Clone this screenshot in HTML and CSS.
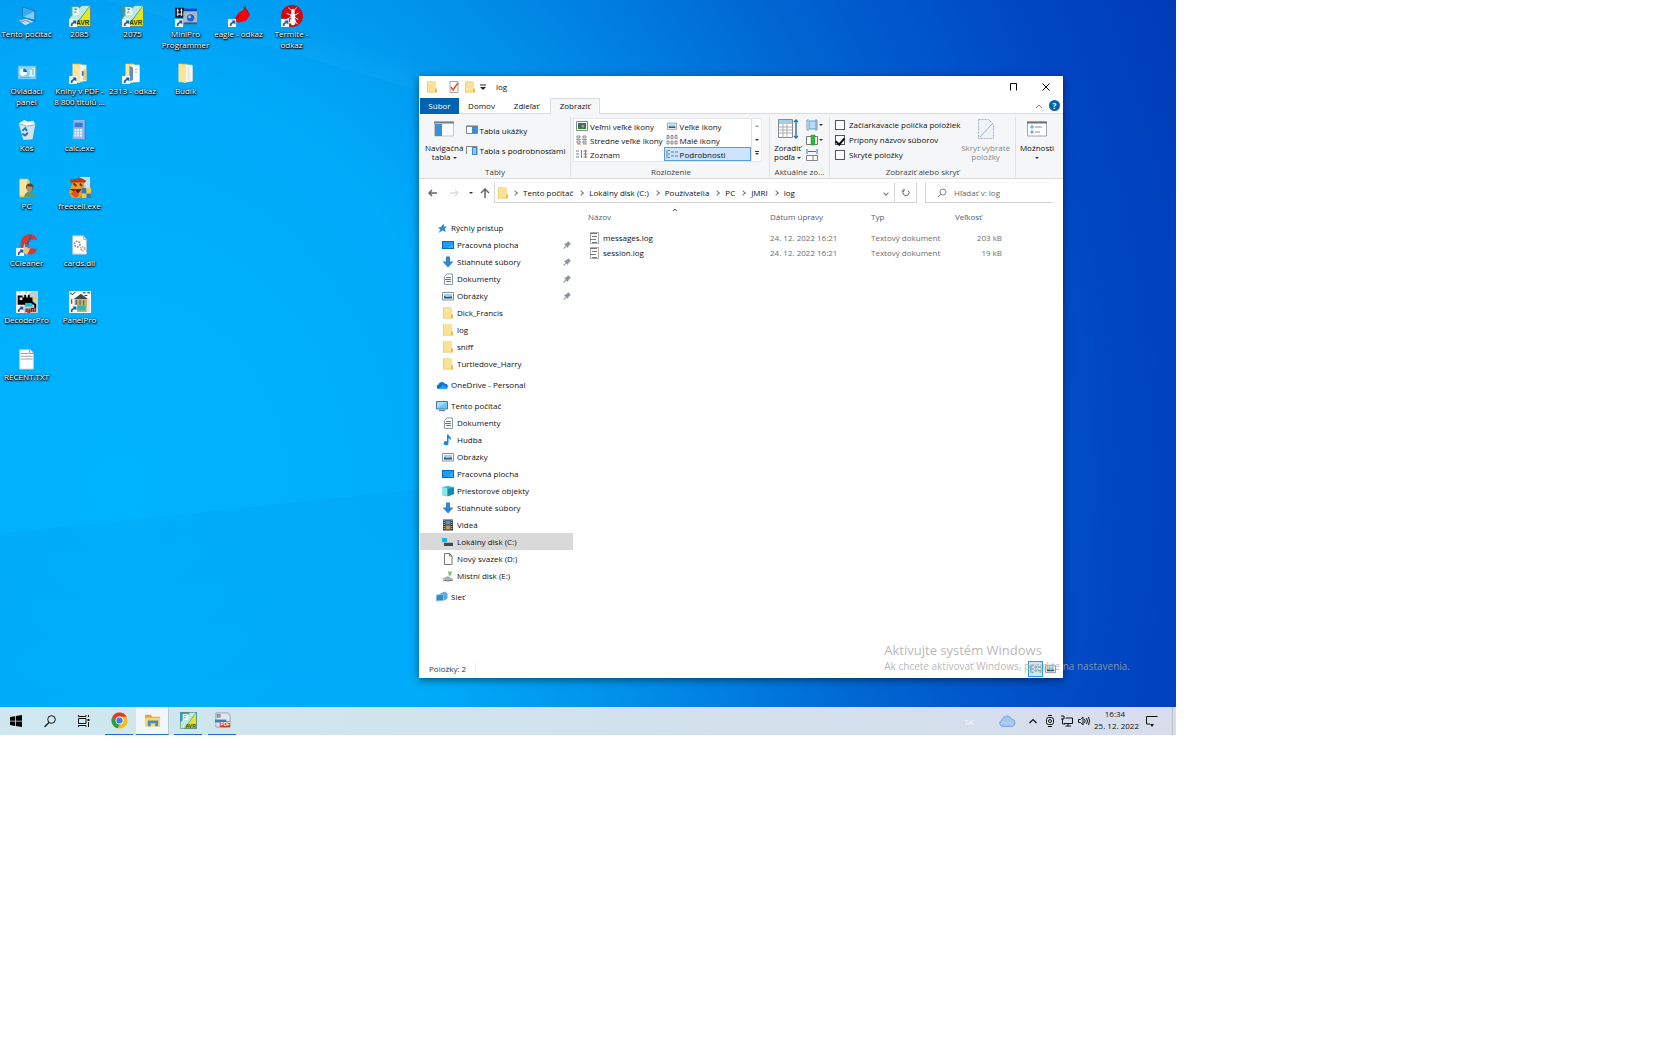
FILE: index.html
```
<!DOCTYPE html>
<html lang="sk">

<head>
    <meta charset="UTF-8">
    <meta name="viewport" content="width=device-width, initial-scale=1.0">
    <title>log</title>
    <link rel="stylesheet" href="styles.css">
</head>

<body>
    <svg class="sprite" aria-hidden="true">
        <symbol id="folder" viewBox="0 0 12 12"><path d="M1 .5h8.500V7l1.500 1v3.500H1z" fill="#e6bd55"/><path d="M1.500 1h7.500v9.800H1.500z" fill="#fde293"/></symbol>
        <symbol id="desktop" viewBox="0 0 12 12"><path d="M0 2h12v8H0z" fill="#0869b8"/><path d="M1 3h10v6H1z" fill="#1b9cf5"/><path d="M6 9l5-5v5z" fill="#39adff"/></symbol>
        <symbol id="download" viewBox="0 0 12 12"><path d="M4 .5h4v5h3.500L6 11.500.5 5.500H4z" fill="#2f86d6"/></symbol>
        <symbol id="doc" viewBox="0 0 12 12"><path d="M2.500 3.500L5 1h5.500v10.500h-8z" fill="#fff" stroke="#8c9aa5"/><path d="M4 4.500h5M3 6.500h6M4 8.500h5" stroke="#2489cf" stroke-width="1.200"/></symbol>
        <symbol id="picture" viewBox="0 0 12 12"><path d="M.5 2.500h11v7.500H.5z" fill="#fff" stroke="#8a8f94"/><path d="M2 4h8v4.500H2z" fill="#9fd0ee"/><path d="M2 8.500V6l3 1 5-.5v2z" fill="#2d5d7c"/></symbol>
        <symbol id="star" viewBox="0 0 12 12"><path d="M7.500 1.500l.5 3h3L9 6.500l.5 3.500L6.500 8.500l-4 2.500 1.800-3.500L2 5.500l3-.5z" fill="#2f8fdd"/></symbol>
        <symbol id="cloud" viewBox="0 0 12 12"><path d="M2.500 10a2.300 2.300 0 0 1 0-4.500A3.500 3.500 0 0 1 9 4.800a2.600 2.600 0 0 1 .5 5.200z" fill="#1273cb"/><path d="M2.500 10L7 6l4.500 2.500q-.4 1.500-2 1.500z" fill="#28a0ea"/></symbol>
        <symbol id="pc" viewBox="0 0 12 12"><path d="M.5 1.500h11v7.500H.5z" fill="#70c3f3" stroke="#3b7eaa"/><path d="M1 2h10L1 8z" fill="#a5ddfa"/><path d="M3 10.500h6" stroke="#5b7d93" stroke-width="1.200"/></symbol>
        <symbol id="music" viewBox="0 0 12 12"><path d="M5 .5h1.500c0 2 3.500 2.500 2.500 6-.4-1.500-1.400-2-2.500-2.300V9A2.400 2.100 0 1 1 5 7.200z" fill="#1689dc"/></symbol>
        <symbol id="cube" viewBox="0 0 12 12"><path d="M0 2l6-1 6 1v7l-6 2.500L0 10z" fill="#31b8cf"/><path d="M0 2l5 1v8L0 10z" fill="#8be5ef"/><path d="M6 4l6-1.500V9l-6 2z" fill="#168cad"/></symbol>
        <symbol id="video" viewBox="0 0 12 12"><path d="M1 .5h10v11H1z" fill="#333b43"/><path d="M3.500 1.500h5v4h-5z" fill="#6292b6"/><path d="M3.500 6.500h5v4h-5z" fill="#c29a4b"/><path d="M2.200 1v10M9.800 1v10" stroke="#d3d7da" stroke-dasharray="1 1"/></symbol>
        <symbol id="disk" viewBox="0 0 12 12"><path d="M0 2h5v4H0z" fill="#11b2ed"/><path d="M2 7h9v3H2z" fill="#42484d"/><path d="M1.500 6.500h9" stroke="#aeb6bc"/></symbol>
        <symbol id="page" viewBox="0 0 12 12"><path d="M2.500.5H7.500L10 3v8.500H2.500z" fill="#fff" stroke="#777"/><path d="M7.500.5V3H10" fill="none" stroke="#777"/></symbol>
        <symbol id="usb" viewBox="0 0 12 12"><path d="M0 8.500l6-2.500 5 3-4 2z" fill="#aeb2b5"/><path d="M1 10l5 1 5-1" stroke="#6b6f72" fill="none"/><path d="M6 1l2 1 2-1-1 4-2 1z" fill="#79be5f"/></symbol>
        <symbol id="network" viewBox="0 0 12 12"><path d="M4 2.500l5-2 2.500 2v5l-3 2z" fill="#58aade"/><path d="M.5 4l7-.7v6l-7 .7z" fill="#348bc7" stroke="#80c1e8"/></symbol>
        <symbol id="pin" viewBox="0 0 8 8"><path d="M5 0l3 3-1 .4L5.500 5 5 7 3.400 5.400 1 8l-.7-.7L2.700 4.700 1 3l2-.5L4.600 1z" fill="#8a949d"/></symbol>
        <symbol id="textfile" viewBox="0 0 12 12"><path d="M2.500.5h8v11h-8z" fill="#fff" stroke="#aaa"/><path d="M2 1.500h7M4 4.500h5M2 7.500h6M4 10.500h5" stroke="#777"/></symbol>
        <symbol id="pane-left" viewBox="0 0 20 16"><path d="M.5 1h19v14H.5z" fill="#f8fafc" stroke="#c0c6ca"/><path d="M0 .5h20v2H0z" fill="#777d82"/><path d="M1 3h7v12H1z" fill="#398fd8"/></symbol>
        <symbol id="pane-right" viewBox="0 0 12 10"><path d="M.5 1.500h11v7H.5z" fill="#fff" stroke="#7e878d"/><path d="M6 2h5v6H6z" fill="#378dd7"/><path d="M0 1h12" stroke="#71787d"/></symbol>
        <symbol id="pane-detail" viewBox="0 0 12 10"><path d="M.5 9V1.500h11" fill="none" stroke="#7e878d"/><path d="M6 2h5.500v8H6z" fill="#378dd7"/><path d="M7 4h3M7 6h3M7 8h3" stroke="#fff"/></symbol>
        <symbol id="tiles" viewBox="0 0 12 10"><path d="M1 1h3v2H1zM7 1h3v2H7zM1 6h3v2H1zM7 6h3v2H7z" fill="none" stroke="#6c767d" stroke-width=".8"/><path d="M0 4.500h5M6 4.500h5M1 9h4M7 9h4" stroke="#bd6e58" stroke-width=".8"/></symbol>
        <symbol id="small-grid" viewBox="0 0 12 10"><path d="M1 .5h2v3H1zM1 6h2v3H1zM5 .5h2v3H5zM5 6h2v3H5zM9 .5h2v3H9zM9 6h2v3H9z" fill="none" stroke="#766d70" stroke-width=".8"/></symbol>
        <symbol id="listing" viewBox="0 0 12 10"><path d="M0 2h3M0 5h3M0 8h3M5.500 1v8M7.500 2h4M7.500 5h4M7.500 8h4M9.500 1v8" stroke="#7b8085"/></symbol>
        <symbol id="details" viewBox="0 0 12 10"><path d="M1 1v8M2 1.500h2M2 5h2M2 8.500h2M5 3h3M9 3h3M5 7h3M9 7h3" stroke="#5d7e9d"/></symbol>
        <symbol id="sort" viewBox="0 0 20 20"><path d="M.5.5h14v18H.5z" fill="#fff" stroke="#868c90"/><path d="M1 1h13v4H1z" fill="#a6cbe4"/><path d="M1 8h13M1 11h13M1 14h13M5 5v13M9 5v13" stroke="#a9adb0"/><path d="M18 1v18M16 3l2-2 2 2M16 17l2 2 2-2" fill="none" stroke="#2e78b7" stroke-width="1.500"/></symbol>
        <symbol id="group" viewBox="0 0 12 12"><path d="M1 1v10M11 1v10M1 1h2M1 11h2M9 1h2M9 11h2" stroke="#86929c"/><path d="M3 2h7v8H3z" fill="#b4dcfa" stroke="#5c9ed0"/></symbol>
        <symbol id="columns" viewBox="0 0 12 12"><path d="M.5 2.500h11v8H.5z" fill="#fff" stroke="#777"/><path d="M5 1h4v10H5z" fill="#26bd32" stroke="#666" stroke-width=".5"/></symbol>
        <symbol id="fit" viewBox="0 0 12 12"><path d="M1 0v5M11 0v5M2 2.500h8" stroke="#287eca"/><path d="M.5 6.500h11v5H.5zM7 6.500v5" fill="#fff" stroke="#858585"/></symbol>
        <symbol id="hide" viewBox="0 0 16 20"><path d="M.5.5h10l5 5v14H.5z" fill="#edf2fb" stroke="#a4afc2" stroke-dasharray="2 1"/><path d="M2 18L15 4" stroke="#a4b0c5"/></symbol>
        <symbol id="options" viewBox="0 0 20 16"><path d="M.5 1h19v14H.5z" fill="#fff" stroke="#a3a8ac"/><path d="M0 .5h20v2H0z" fill="#6c7378"/><path d="M4 5h2v2H4zM4 10h2v2H4z" fill="none" stroke="#4a9edb"/><path d="M8 6h7M8 11h5" stroke="#838b91"/></symbol>
        <symbol id="shortcut" viewBox="0 0 9 9"><path d="M0 0h9v9H0z" fill="#f5f8fb"/><path d="M2 8q-.5-4 3-4.500L4 2h4v4L6.500 5Q3.500 5 3.800 8z" fill="#185aa9"/></symbol>
        <symbol id="big-folder" viewBox="0 0 24 24"><path d="M4 2h9l2 3v17H4z" fill="#f2cc68"/><path d="M11 3h8v18h-8z" fill="#f6f4e9"/><path d="M4 2l8 2v19l-8-2z" fill="#fde49b"/><path d="M16 8h3v12h-4z" fill="#f0cc72"/></symbol>
        <symbol id="bascom" viewBox="0 0 24 24"><path d="M0 0h24v24H0z" fill="#2ba8ac"/><path d="M0 24V15L15 0h8L5 24z" fill="#bfe8de"/><path d="M23 1v22H7z" fill="#e3e522"/><path d="M.5.5h23v23H.5z" fill="none" stroke="#59858e"/></symbol>
    </svg>

    <main class="desktop">
        <div class="icons">
            <a class="shortcut" href="#"><svg viewBox="0 0 24 24"><path d="M7 2l14 4v12L7 14z" fill="#216cab"/><path d="M8 3l12 4v9L8 13z" fill="#71d3ff"/><path d="M8 3l12 4L8 13z" fill="#37adf0"/><path d="M3 17l8-2 8 3-9 4z" fill="#c3ddeb"/><path d="M5 18l6-1 5 2" stroke="#628ba2" fill="none"/></svg><span>Tento počítač</span></a>
            <a class="shortcut" href="#"><svg viewBox="0 0 24 24"><use href="#bascom"/><text class="logo-b" x="3" y="11">B</text><text class="logo-avr" x="8" y="22">AVR</text><use href="#shortcut" y="15" width="9" height="9"/></svg><span>2085</span></a>
            <a class="shortcut" href="#"><svg viewBox="0 0 24 24"><use href="#bascom"/><text class="logo-b" x="3" y="11">B</text><text class="logo-avr" x="8" y="22">AVR</text><use href="#shortcut" y="15" width="9" height="9"/></svg><span>2075</span></a>
            <a class="shortcut" href="#"><svg viewBox="0 0 24 24"><path d="M0 3h10v11H0z" fill="#161e24"/><path d="M3 4v8M7 4v8M2 6h2M6 6h2M2 10h6" stroke="#fff"/><path d="M10 4h14v3H10z" fill="#1743b2"/><path d="M9 7h15v13H9z" fill="#a9b8c7"/><circle cx="17" cy="14" r="4" fill="#1c62df"/><circle cx="16" cy="13" r="1.500" fill="#9fd8ff"/><path d="M10 19h14v2H10z" fill="#495365"/><use href="#shortcut" y="15" width="9" height="9"/></svg><span>MiniPro Programmer</span></a>
            <a class="shortcut" href="#"><svg viewBox="0 0 24 24"><path d="M19 0l1 4 4 7-4 6-8 2-6-2 5-8 6-4z" fill="#f5050b"/><path d="M17 2l2 3M20 5l3 5M8 17l4-6" stroke="#74141e"/><use href="#shortcut" y="15" width="9" height="9"/></svg><span>eagle - odkaz</span></a>
            <a class="shortcut" href="#"><svg viewBox="0 0 24 24"><circle cx="12" cy="12" r="12" fill="#cb0c17"/><ellipse cx="13" cy="7" rx="2" ry="3" fill="#fff"/><ellipse cx="13" cy="12" rx="2.500" ry="3" fill="#fff"/><ellipse cx="13" cy="18" rx="3" ry="4" fill="#fff"/><path d="M8 3l5 4 4-4M6 9l7 3 6-3M6 16l7-4 6 4M8 21l5-7 5 7" stroke="#fff" fill="none"/><use href="#shortcut" y="15" width="9" height="9"/></svg><span>Termite - odkaz</span></a>

            <a class="shortcut" href="#"><svg viewBox="0 0 24 24"><path d="M2 4h20v15H2z" fill="#88d3f6" stroke="#479bc7"/><circle cx="8" cy="11" r="4" fill="#edfaff"/><path d="M8 11V7a4 4 0 0 1 4 4z" fill="#136eb3"/><path d="M14 9h2v6h-2M18 7h2v8h-3V9" fill="none" stroke="#fff"/><path d="M4 17h12" stroke="#54b5df"/></svg><span>Ovládací panel</span></a>
            <a class="shortcut" href="#"><svg viewBox="0 0 24 24"><use href="#big-folder"/><path d="M14 10h2v5h-2z" fill="#3c77b0"/><use href="#shortcut" y="15" width="9" height="9"/></svg><span>Knihy v PDF - 8 800 titulů ...</span></a>
            <a class="shortcut" href="#"><svg viewBox="0 0 24 24"><use href="#big-folder"/><path d="M8 4h11v18H8z" fill="#fff"/><path d="M8 4l4 2v14l-4 1z" fill="#5691c4"/><path d="M14 8h3M14 11h3" stroke="#a7adb3"/><use href="#shortcut" y="15" width="9" height="9"/></svg><span>2313 - odkaz</span></a>
            <a class="shortcut" href="#"><svg viewBox="0 0 24 24"><use href="#big-folder"/><path d="M12 5l7-1v17l-7 1z" fill="#f7f7f1"/><path d="M15 5v16" stroke="#d8d8cc"/></svg><span>Budík</span></a>

            <a class="shortcut row-start" href="#"><svg viewBox="0 0 24 24"><path d="M3 5l18 1-3 16-10 1z" fill="#d4e4ec"/><path d="M3 5l6-4 4 2 6-1 2 4-9 2z" fill="#f6fafb"/><path d="M3 5l9 3 9-2" stroke="#8ea8b5" fill="none"/><path d="M7 13l3-3 2 3M13 15l-3 3-3-2" fill="none" stroke="#1975bc" stroke-width="2"/></svg><span>Kôš</span></a>
            <a class="shortcut" href="#"><svg viewBox="0 0 24 24"><path d="M5 1h13l1 21-15 1z" fill="#4482c6"/><path d="M5 1h12v21H4z" fill="#93baf0"/><path d="M6 4h9v5H6z" fill="#3c77d1"/><path d="M6 12h9M6 15h9M6 18h9" stroke="#eff8ff" stroke-width="2" stroke-dasharray="2 1"/></svg><span>calc.exe</span></a>
            <a class="shortcut row-start" href="#"><svg viewBox="0 0 24 24"><path d="M4 2h9l2 3v17H4z" fill="#eac96c"/><path d="M4 3h8v18l-8-1z" fill="#fce39b"/><circle cx="15" cy="11" r="4" fill="#594135"/><path d="M12 10q4 0 6 1v3l-3 3-3-2z" fill="#b48b67"/><path d="M9 22q0-6 6-6 5 0 6 6z" fill="#5a9a78"/></svg><span>PC</span></a>
            <a class="shortcut" href="#"><svg viewBox="0 0 24 24"><path d="M12 0h11v14H12z" fill="#c9dff2"/><path d="M1 3l12-2 6 3-3 3H3z" fill="#bd3b15"/><path d="M4 6h12l2 10-6 7H3L0 17z" fill="#e59a30"/><path d="M5 7l3 3M12 7l2 3M4 14h8l-3 4z" stroke="#652e18" stroke-width="2"/><path d="M2 18l5-4 4 6-4 3z" fill="#de541c"/><path d="M14 12h5v6h-5zM19 18h5v5h-5z" fill="#367ab8"/><path d="M19 12h5v6h-5zM14 18h5v5h-5z" fill="#f6c544"/></svg><span>freecell.exe</span></a>
            <a class="shortcut row-start" href="#"><svg viewBox="0 0 24 24"><path d="M23 7Q17 4 14 9q-2 8 9 7-2 7-10 6Q5 20 5 11T14 0q8 0 9 7z" fill="#d8392f"/><path d="M17 1l-6 12" stroke="#2365a1" stroke-width="2"/><path d="M9 10l7 5-4 8-5-4z" fill="#edbf89"/><path d="M9 10l5 3 2 3-6-2z" fill="#2986c5"/><use href="#shortcut" y="15" width="9" height="9"/></svg><span>CCleaner</span></a>
            <a class="shortcut" href="#"><svg viewBox="0 0 24 24"><path d="M4 2h12l3 4v16H4z" fill="#fff" stroke="#b6bec4"/><path d="M16 2v4h3" fill="none" stroke="#a0a8ad"/><circle cx="9" cy="11" r="3" fill="none" stroke="#91999e" stroke-width="2" stroke-dasharray="2 1"/><circle cx="15" cy="16" r="2" fill="none" stroke="#91999e" stroke-width="2" stroke-dasharray="1 1"/></svg><span>cards.dll</span></a>
            <a class="shortcut row-start" href="#"><svg viewBox="0 0 24 24"><path d="M0 0h24v24H0z" fill="#c9cdce"/><path d="M2 1v3h4V1h3v3h4V1h3" stroke="#fff" stroke-width="2" fill="none"/><path d="M2 5h5v2h2V4h2v3h2V4h2v3h3v8H2z" fill="#000"/><path d="M4 7h3v3H4z" fill="#ddd"/><path d="M19 8h4" stroke="#e9d431" stroke-width="2"/><path d="M10 13h8v4h-8z" fill="#19c8ce"/><path d="M17 12l4 3v4" stroke="#000" stroke-width="2" fill="none"/><path d="M11 19v4M13 19v4h2v-4M17 23v-4h2v4M21 19v4" stroke="#a51414" stroke-width="1.500" fill="none"/><use href="#shortcut" y="15" width="9" height="9"/></svg><span>DecoderPro</span></a>
            <a class="shortcut" href="#"><svg viewBox="0 0 24 24"><path d="M0 0h24v24H0z" fill="#fff"/><path d="M1 2l3 2 3-3M15 2h3M20 2h3M17 5h3M3 9v5" stroke="#111" fill="none"/><path d="M5 9l8-6 8 6z" fill="#424946"/><path d="M6 9h14v14H6z" fill="#b9ad7e"/><path d="M8 10v5M12 10v5M16 10v5" stroke="#424946"/><path d="M9 16h9v5H9z" fill="#29bca6"/><path d="M20 8h3v15h-4z" fill="#e5e8cf"/><use href="#shortcut" y="15" width="9" height="9"/></svg><span>PanelPro</span></a>
            <a class="shortcut row-start" href="#"><svg viewBox="0 0 24 24"><path d="M4 2h12l3 4v17H4z" fill="#fff" stroke="#c5cacd"/><path d="M15 2v4h4" fill="none" stroke="#8c9296"/><path d="M5 6h9M5 9h13M5 12h13" stroke="#96999c"/></svg><span>RECENT.TXT</span></a>
        </div>

        <section class="window">
            <header class="titlebar">
                <svg class="ico"><use href="#folder"/></svg>
                <svg class="ico check-icon" viewBox="0 0 12 12"><path d="M2 .5h8v11H2z" fill="#fff" stroke="#aaa"/><path d="M3 6l2 3 5-7" fill="none" stroke="#df4f24" stroke-width="1.500"/></svg>
                <svg class="ico"><use href="#folder"/></svg>
                <svg class="caret" viewBox="0 0 6 6"><path d="M0 1h6" stroke="#222"/><path d="M0 3h6L3 6z" fill="#222"/></svg>
                <h1>log</h1>
                <div class="controls">
                    <button aria-label="Maximalizovať"><svg viewBox="0 0 8 8"><path d="M.5 7.500v-7h6v7" fill="none" stroke="#000"/></svg></button>
                    <button aria-label="Zavrieť"><svg viewBox="0 0 8 8"><path d="M.5.5l7 7m0-7l-7 7" stroke="#000"/></svg></button>
                </div>
            </header>

            <nav class="tabs">
                <button class="tab file">Súbor</button>
                <button class="tab home">Domov</button>
                <button class="tab share">Zdieľať</button>
                <button class="tab active">Zobraziť</button>
                <button class="collapse" aria-label="Zbaliť"><svg viewBox="0 0 8 8"><path d="M1 6l3-3 3 3" fill="none" stroke="#888"/></svg></button>
                <button class="help" aria-label="Pomocník">?</button>
            </nav>

            <div class="ribbon">
                <div class="group panes">
                    <div class="tools">
                        <button class="big"><svg class="wide"><use href="#pane-left"/></svg><span>Navigačná<br>tabla <i class="arrow"></i></span></button>
                        <div class="stack">
                            <button><svg class="ico"><use href="#pane-right"/></svg>Tabla ukážky</button>
                            <button><svg class="ico"><use href="#pane-detail"/></svg>Tabla s podrobnosťami</button>
                        </div>
                    </div>
                    <h2>Tably</h2>
                </div>
                <div class="group layout">
                    <div class="gallery">
                        <div class="choices">
                            <button><svg class="ico" viewBox="0 0 12 10"><path d="M.5.5h11v9H.5z" fill="#fff" stroke="#888"/><path d="M2 2h8v6H2z" fill="#346d9b"/><path d="M2 8V5l4-1 4 3v1z" fill="#308437"/><circle cx="7" cy="5" r="1.500" fill="#db8e3e"/></svg>Veľmi veľké ikony</button>
                            <button><svg class="ico"><use href="#picture"/></svg>Veľké ikony</button>
                            <button><svg class="ico"><use href="#tiles"/></svg>Stredne veľké ikony</button>
                            <button><svg class="ico"><use href="#small-grid"/></svg>Malé ikony</button>
                            <button><svg class="ico"><use href="#listing"/></svg>Zoznam</button>
                            <button class="selected"><svg class="ico"><use href="#details"/></svg>Podrobnosti</button>
                        </div>
                        <div class="scroller">
                            <button aria-label="Hore"><i class="arrow up"></i></button>
                            <button aria-label="Dole"><i class="arrow"></i></button>
                            <button aria-label="Viac"><i class="arrow more"></i></button>
                        </div>
                    </div>
                    <h2>Rozloženie</h2>
                </div>
                <div class="group current">
                    <div class="tools">
                        <button class="big"><svg class="tall"><use href="#sort"/></svg><span>Zoradiť<br>podľa <i class="arrow"></i></span></button>
                        <div class="minis">
                            <button aria-label="Zoskupiť podľa"><svg class="ico"><use href="#group"/></svg><i class="arrow"></i></button>
                            <button aria-label="Pridať stĺpce"><svg class="ico"><use href="#columns"/></svg><i class="arrow"></i></button>
                            <button aria-label="Prispôsobiť stĺpce"><svg class="ico"><use href="#fit"/></svg></button>
                        </div>
                    </div>
                    <h2>Aktuálne zo...</h2>
                </div>
                <div class="group show">
                    <div class="tools">
                        <div class="checks">
                            <label><input type="checkbox">Začiarkavacie políčka položiek</label>
                            <label><input type="checkbox" checked>Prípony názvov súborov</label>
                            <label><input type="checkbox">Skryté položky</label>
                        </div>
                        <button class="big" disabled><svg class="tall"><use href="#hide"/></svg><span>Skryť vybraté<br>položky</span></button>
                    </div>
                    <h2>Zobraziť alebo skryť</h2>
                </div>
                <div class="group last">
                    <button class="big"><svg class="wide"><use href="#options"/></svg><span>Možnosti<br><i class="arrow"></i></span></button>
                </div>
            </div>

            <div class="location">
                <div class="history">
                    <button aria-label="Späť"><svg viewBox="0 0 10 10"><path d="M9 5H1m3-3L1 5l3 3" fill="none" stroke="#666" stroke-width="1.500"/></svg></button>
                    <button aria-label="Dopredu"><svg viewBox="0 0 10 10"><path d="M1 5h8M6 2l3 3-3 3" fill="none" stroke="#ccc"/></svg></button>
                    <button class="recent" aria-label="Nedávne"><i class="arrow"></i></button>
                    <button aria-label="Nahor"><svg viewBox="0 0 10 10"><path d="M5 10V1M1 5l4-4 4 4" fill="none" stroke="#666" stroke-width="1.500"/></svg></button>
                </div>
                <div class="address">
                    <svg class="ico"><use href="#folder"/></svg>
                    <i class="sep"></i><a href="#">Tento počítač</a>
                    <i class="sep"></i><a href="#">Lokálny disk (C:)</a>
                    <i class="sep"></i><a href="#">Používatelia</a>
                    <i class="sep"></i><a href="#">PC</a>
                    <i class="sep"></i><a href="#">JMRI</a>
                    <i class="sep"></i><a href="#">log</a>
                    <button class="drop" aria-label="Predchádzajúce umiestnenia"><i class="sep down"></i></button>
                    <button class="refresh" aria-label="Obnoviť"><svg viewBox="0 0 10 10"><path d="M7 2.500a3 3 0 1 1-4 0M3 .5v2.500H.5" fill="none" stroke="#666"/></svg></button>
                </div>
                <label class="search">
                    <svg viewBox="0 0 10 10"><circle cx="6" cy="4" r="3" fill="none" stroke="#888"/><path d="M4 6L1 9" stroke="#888"/></svg>
                    <input type="text" placeholder="Hľadať v: log" aria-label="Hľadať">
                </label>
            </div>

            <div class="body">
                <nav class="tree">
                    <a class="root" href="#"><svg class="ico"><use href="#star"/></svg>Rýchly prístup</a>
                    <a href="#"><svg class="ico"><use href="#desktop"/></svg>Pracovná plocha<svg class="pin"><use href="#pin"/></svg></a>
                    <a href="#"><svg class="ico"><use href="#download"/></svg>Stiahnuté súbory<svg class="pin"><use href="#pin"/></svg></a>
                    <a href="#"><svg class="ico"><use href="#doc"/></svg>Dokumenty<svg class="pin"><use href="#pin"/></svg></a>
                    <a href="#"><svg class="ico"><use href="#picture"/></svg>Obrázky<svg class="pin"><use href="#pin"/></svg></a>
                    <a href="#"><svg class="ico"><use href="#folder"/></svg>Dick_Francis</a>
                    <a href="#"><svg class="ico"><use href="#folder"/></svg>log</a>
                    <a href="#"><svg class="ico"><use href="#folder"/></svg>sniff</a>
                    <a href="#"><svg class="ico"><use href="#folder"/></svg>Turtledove_Harry</a>
                    <a class="root" href="#"><svg class="ico"><use href="#cloud"/></svg>OneDrive - Personal</a>
                    <a class="root" href="#"><svg class="ico"><use href="#pc"/></svg>Tento počítač</a>
                    <a href="#"><svg class="ico"><use href="#doc"/></svg>Dokumenty</a>
                    <a href="#"><svg class="ico"><use href="#music"/></svg>Hudba</a>
                    <a href="#"><svg class="ico"><use href="#picture"/></svg>Obrázky</a>
                    <a href="#"><svg class="ico"><use href="#desktop"/></svg>Pracovná plocha</a>
                    <a href="#"><svg class="ico"><use href="#cube"/></svg>Priestorové objekty</a>
                    <a href="#"><svg class="ico"><use href="#download"/></svg>Stiahnuté súbory</a>
                    <a href="#"><svg class="ico"><use href="#video"/></svg>Videá</a>
                    <a class="current-item" href="#"><svg class="ico"><use href="#disk"/></svg>Lokálny disk (C:)</a>
                    <a href="#"><svg class="ico"><use href="#page"/></svg>Nový svazek (D:)</a>
                    <a href="#"><svg class="ico"><use href="#usb"/></svg>Místní disk (E:)</a>
                    <a class="root" href="#"><svg class="ico"><use href="#network"/></svg>Sieť</a>
                </nav>
                <div class="files">
                    <svg class="sorted" viewBox="0 0 8 8"><path d="M2 5l2-2 2 2" fill="none" stroke="#555"/></svg>
                    <table>
                        <thead>
                            <tr>
                                <th class="name">Názov</th>
                                <th class="date">Dátum úpravy</th>
                                <th class="type">Typ</th>
                                <th class="size">Veľkosť</th>
                                <th></th>
                            </tr>
                        </thead>
                        <tbody>
                            <tr>
                                <td><svg class="ico"><use href="#textfile"/></svg>messages.log</td>
                                <td>24. 12. 2022 16:21</td>
                                <td>Textový dokument</td>
                                <td class="number">203 kB</td>
                                <td></td>
                            </tr>
                            <tr>
                                <td><svg class="ico"><use href="#textfile"/></svg>session.log</td>
                                <td>24. 12. 2022 16:21</td>
                                <td>Textový dokument</td>
                                <td class="number">19 kB</td>
                                <td></td>
                            </tr>
                        </tbody>
                    </table>
                </div>
            </div>

            <footer class="status">
                <span>Položky: 2</span>
                <button class="view on" aria-label="Podrobnosti"><svg class="ico"><use href="#details"/></svg></button>
                <button class="view" aria-label="Veľké ikony"><svg class="ico"><use href="#picture"/></svg></button>
            </footer>
        </section>

        <div class="watermark">
            <p class="big-line">Aktivujte systém Windows</p>
            <p>Ak chcete aktivovať Windows, prejdite na nastavenia.</p>
        </div>

        <footer class="taskbar">
            <button aria-label="Štart"><svg viewBox="0 0 12 12"><path d="M0 2l5-.8v4.500H0zM5.800 1L12 0v5.700H5.800zM0 6.400h5v4.500L0 10zM5.800 6.400H12V12l-6.200-1z" fill="#000"/></svg></button>
            <button aria-label="Hľadať"><svg viewBox="0 0 12 12"><circle cx="7.500" cy="4.500" r="3.800" fill="none" stroke="#111"/><path d="M5 7.500L.5 12" stroke="#111" stroke-width="1.200"/></svg></button>
            <button aria-label="Zobrazenie úloh"><svg viewBox="0 0 12 12"><path d="M.5 3.500h7.500v5H.5zM.5 0v1.500H8V0M.5 12v-1.500H8V12M10.500 0v2M10.500 7v5" fill="none" stroke="#111"/><path d="M9.500 4h2v2h-2z" fill="#111"/></svg></button>
            <button class="app first" aria-label="Chrome"><svg viewBox="0 0 18 18"><circle cx="9" cy="9" r="8.500" fill="#f9bd19"/><path d="M1.500 5A8.500 8.500 0 0 1 16.500 5H9L6 10.500z" fill="#dd3a2b"/><path d="M1.500 5L6 11l4 1-3 5.300A8.500 8.500 0 0 1 1.500 5z" fill="#249f4b"/><circle cx="9" cy="9" r="4.200" fill="#fff"/><circle cx="9" cy="9" r="3.300" fill="#397ee9"/></svg></button>
            <button class="app open" aria-label="Prieskumník"><svg viewBox="0 0 18 18"><path d="M1 3h6l2 2h8v10H1z" fill="#e4a736"/><path d="M1 6h16v9H1z" fill="#ffd46c"/><path d="M4 15V9h11v6h-3v-3H7v3z" fill="#438fc2"/></svg></button>
            <button class="app" aria-label="BASCOM-AVR"><svg viewBox="0 0 24 24"><use href="#bascom"/><text class="logo-b" x="3" y="11">B</text><text class="logo-avr" x="8" y="22">AVR</text></svg></button>
            <button class="app" aria-label="PDF"><svg viewBox="0 0 18 18"><path d="M2 1h13l2 3v12H2z" fill="#dfe8f0" stroke="#8ea6b8"/><path d="M3 2h2v4H3z" fill="#49ad61"/><path d="M5 2h2v4H5z" fill="#bd78c2"/><path d="M1 8h12v3H1z" fill="#417eaf"/><path d="M6 10h11v6H6z" fill="#dd3224"/><text class="logo-pdf" x="7" y="15">PDF</text></svg></button>
            <div class="tray">
                <span class="lang">SK</span>
                <button class="weather" aria-label="Počasie"><svg viewBox="0 0 18 12"><path d="M4 11.500a3.500 3.500 0 0 1 0-6.500A5 5 0 0 1 13.500 4 3.800 3.800 0 0 1 14 11.500z" fill="#a5c3f2" stroke="#7ba4e6"/><path d="M3 9q3-4 6 0 3-3 6 1" fill="none" stroke="#c5dbfc"/></svg></button>
                <button aria-label="Skryté ikony"><svg viewBox="0 0 12 12"><path d="M2.500 8L6 4.500 9.500 8" fill="none" stroke="#111" stroke-width="1.200"/></svg></button>
                <button aria-label="Kamera"><svg viewBox="0 0 12 12"><path d="M4 .5h4M4 11.500h4" stroke="#111"/><rect x="2.500" y="2.500" width="7" height="7" rx="2" fill="none" stroke="#111"/><circle cx="6" cy="6" r="1.500" fill="none" stroke="#111"/></svg></button>
                <button aria-label="Sieť"><svg viewBox="0 0 12 12"><path d="M4.500 3h7v5.500H3M7 8.500V11M4.500 11H10M0 1h3v3H0M1.500 4v5H4" fill="none" stroke="#111"/></svg></button>
                <button aria-label="Hlasitosť"><svg viewBox="0 0 12 12"><path d="M.5 4.500h2L5 2v8L2.500 7.500h-2zM6.500 4q1.500 2 0 4M8.500 3q2 3 0 6M10.500 2q2 4 0 8" fill="none" stroke="#111"/></svg></button>
                <time>16:34<br>25. 12. 2022</time>
                <button class="notice" aria-label="Oznámenia"><svg viewBox="0 0 12 12"><path d="M.5 9V1.500h11M.5 9H4" fill="none" stroke="#111"/><path d="M4 9h4l-2 3z" fill="#111"/></svg></button>
            </div>
        </footer>
    </main>
</body>

</html>
```

FILE: styles.css
```
* {
    box-sizing: border-box;
}

body {
    margin: 0;
    background-color: #fff;
    font-family: "Open Sans", "Noto Sans", sans-serif;
    font-size: 8px;
    line-height: 11px;
    color: #111;
}

button {
    display: flex;
    align-items: center;
    justify-content: center;
    margin: 0;
    padding: 0;
    border: none;
    background: none;
    font: inherit;
    color: inherit;
    white-space: nowrap;
}

a {
    color: inherit;
    text-decoration: none;
}

h1,
h2,
p {
    margin: 0;
    font-size: 8px;
    font-weight: normal;
}

svg {
    flex: none;
}

.sprite {
    position: absolute;
    width: 0;
    height: 0;
}

.ico {
    width: 12px;
    height: 12px;
}

.logo-b,
.logo-avr,
.logo-pdf {
    font-family: "Liberation Sans", sans-serif;
    font-weight: bold;
    text-shadow: none;
}

.logo-b {
    font-size: 12px;
    fill: #fff;
}

.logo-avr {
    font-size: 7px;
    fill: #303500;
}

.logo-pdf {
    font-size: 5px;
    fill: #fff;
}

.arrow {
    display: inline-block;
    border: 2px solid transparent;
    border-top-color: #333;
    border-bottom: none;
    vertical-align: middle;
}

.arrow.up {
    border-top: none;
    border-bottom: 2px solid #999;
}

.arrow.more {
    position: relative;
}

.arrow.more::before {
    content: "";
    position: absolute;
    left: -2px;
    top: -4px;
    width: 4px;
    height: 1px;
    background-color: #333;
}

.desktop {
    position: relative;
    display: flex;
    flex-direction: column;
    justify-content: space-between;
    width: 70vw;
    height: 70vh;
    overflow: hidden;
    background:
        linear-gradient(16deg, transparent 66%, rgba(70, 190, 255, 0.1) 66%, transparent 76%) 0 0 / 36% 20% no-repeat,
        linear-gradient(174deg, transparent 50%, rgba(0, 130, 220, 0.1) 50%, transparent 100%) 0 100% / 36% 61% no-repeat,
        radial-gradient(ellipse 100% 180% at 10% 66%, #00b4ff 0%, #00acfb 30%, #0092eb 45%, #0064d1 67%, #0047c4 85%, #0038b4 100%);
}

/* desktop icons */
.icons {
    display: grid;
    grid-template-columns: repeat(6, 53px);
    grid-template-rows: repeat(7, 1fr);
    height: 56%;
    padding: 5px 0 6px;
}

.row-start {
    grid-column-start: 1;
}

.shortcut {
    display: flex;
    flex-direction: column;
    align-items: center;
    min-height: 0;
    gap: 1px;
    color: #fff;
    text-align: center;
    text-shadow: 0 1px 1px #000, 1px 1px 2px #000, 0 0 2px #000;
}

.shortcut svg {
    width: 22px;
    height: 22px;
}

/* explorer window */
.window {
    position: absolute;
    left: 419px;
    top: 76px;
    display: flex;
    flex-direction: column;
    width: 644px;
    height: 602px;
    padding-left: 1px;
    background-color: #fff;
    box-shadow: 0 2px 8px rgba(0, 0, 0, 0.5);
}

.titlebar {
    display: flex;
    align-items: center;
    height: 22px;
    padding: 0 10px 1px 6px;
}

.check-icon {
    margin: 0 4px 0 10px;
}

.caret {
    width: 6px;
    height: 6px;
    margin: 0 10px 0 4px;
}

.controls {
    display: flex;
    gap: 24px;
    margin-left: auto;
    padding-right: 3px;
}

.controls svg {
    width: 8px;
    height: 8px;
}

.tabs {
    display: flex;
    align-items: center;
    height: 16px;
    border-bottom: 1px solid #dadbdc;
}

.tab {
    height: 16px;
    width: 45px;
}

.tab.file {
    width: 39px;
    background-color: #0063b1;
    color: #fff;
}

.tab.active {
    width: 50px;
    margin-left: 1px;
    padding-bottom: 1px;
    border: 1px solid #dadbdc;
    border-bottom: none;
    background-color: #f5f6f7;
}

.collapse {
    margin-left: auto;
    margin-right: 6px;
}

.collapse svg {
    width: 8px;
    height: 8px;
}

.help {
    width: 11px;
    height: 11px;
    margin-right: 3px;
    border-radius: 50%;
    background-color: #0063b1;
    color: #fff;
    font-weight: bold;
}

.ribbon {
    display: flex;
    height: 65px;
    padding: 3px 0 1px;
    border-bottom: 1px solid #dadbdc;
    background-color: #f5f6f7;
}

.group {
    display: flex;
    flex-direction: column;
    justify-content: space-between;
    border-right: 1px solid #dfe1e3;
}

.group h2 {
    overflow: hidden;
    text-align: center;
    white-space: nowrap;
    color: #444;
}

.tools {
    display: flex;
    padding-top: 2px;
}

.panes {
    width: 151px;
}

.layout {
    width: 199px;
    padding-left: 2px;
}

.current {
    width: 60px;
}

.show {
    width: 186px;
}

.last {
    flex: 1;
    padding-top: 2px;
    padding-right: 5px;
    justify-content: flex-start;
    border-right: none;
}

.big {
    flex-direction: column;
    justify-content: flex-start;
    gap: 4px;
    line-height: 9px;
}

.big:disabled {
    color: #888;
}

.wide,
.tall {
    width: 20px;
    height: 20px;
}

.panes .tools {
    gap: 3px;
    padding-left: 5px;
}

.stack {
    display: flex;
    flex-direction: column;
    align-items: flex-start;
    gap: 8px;
    padding-top: 5px;
}

.stack button {
    gap: 1px;
}

.choices button {
    gap: 2px;
}

.gallery {
    display: flex;
    width: 189px;
    height: 44px;
    margin-top: 1px;
    border: 1px solid #e6e7e8;
    background-color: #fff;
}

.choices {
    display: grid;
    flex: 1;
    grid-template-columns: 1fr 1fr;
    grid-template-rows: repeat(3, 1fr);
}

.choices button {
    justify-content: flex-start;
    padding-left: 1px;
    border: 1px solid transparent;
}

.choices .selected {
    border-color: #5a9bd5;
    background-color: #cce4fc;
}

.choices .ico {
    width: 12px;
    height: 10px;
}

.scroller {
    display: flex;
    flex-direction: column;
    width: 10px;
    border-left: 1px solid #e0e2e4;
}

.scroller button {
    flex: 1;
}

.current .tools {
    gap: 5px;
    padding-left: 4px;
}

.minis {
    display: flex;
    flex-direction: column;
    align-items: flex-start;
    gap: 3px;
}

.minis button {
    gap: 1px;
}

.show .tools {
    justify-content: space-between;
    padding-left: 5px;
    padding-right: 5px;
}

.checks {
    display: flex;
    flex-direction: column;
    gap: 4px;
}

.checks label {
    display: flex;
    align-items: center;
    gap: 4px;
    white-space: nowrap;
}

.checks input {
    display: flex;
    justify-content: center;
    width: 10px;
    height: 10px;
    margin: 0;
    appearance: none;
    border: 1px solid #555;
    background-color: #fff;
}

.checks input:checked::after {
    content: "";
    width: 4px;
    height: 7px;
    border: solid #111;
    border-width: 0 2px 2px 0;
    transform: rotate(40deg);
}

/* address bar */
.location {
    display: flex;
    height: 24px;
    padding: 3px 10px 0 8px;
    gap: 8px;
}

.history {
    display: flex;
    align-items: center;
    gap: 11px;
    width: 58px;
}

.history .recent {
    width: 4px;
    margin: 0 -4px 0 -1px;
}

.history svg,
.refresh svg,
.search svg {
    width: 10px;
    height: 10px;
}

.address {
    display: flex;
    flex: 1;
    align-items: center;
    gap: 6px;
    padding-left: 2px;
    border: 1px solid #d5d5d5;
    border-top-color: #f7f7f7;
    white-space: nowrap;
}

.address .ico {
    margin-right: -2px;
}

.sep {
    width: 4px;
    height: 4px;
    border: solid #777;
    border-width: 1px 1px 0 0;
    transform: rotate(45deg);
}

.sep.down {
    transform: rotate(135deg);
}

.drop {
    margin-left: auto;
}

.refresh {
    align-self: stretch;
    width: 22px;
    border-left: 1px solid #d5d5d5;
}

.search {
    display: flex;
    align-items: center;
    gap: 7px;
    width: 128px;
    padding-left: 11px;
    border: 1px solid #d5d5d5;
    border-top-color: #f7f7f7;
    border-right: none;
}

.search input {
    flex: 1;
    min-width: 0;
    padding: 0;
    border: none;
    background: none;
    font: inherit;
}

.search input::placeholder {
    color: #666;
}

/* tree and files */
.body {
    display: flex;
    flex: 1;
}

.tree {
    width: 153px;
    padding-top: 16px;
}

.tree a {
    display: flex;
    align-items: center;
    gap: 3px;
    height: 17px;
    padding: 0 2px 0 22px;
}

.tree .root {
    padding-left: 16px;
}

.tree a + .root {
    margin-top: 4px;
}

.tree .current-item {
    background-color: #d9d9d9;
}

.pin {
    width: 8px;
    height: 8px;
    margin-left: auto;
}

.files {
    position: relative;
    flex: 1;
    padding-left: 15px;
}

.sorted {
    position: absolute;
    left: 98px;
    top: 3px;
    width: 8px;
    height: 8px;
}

table {
    width: 100%;
    table-layout: fixed;
    border-collapse: collapse;
}

th {
    height: 27px;
    padding: 0;
    font-weight: normal;
    text-align: left;
    color: #4c607a;
}

.name {
    width: 182px;
}

.date {
    width: 101px;
}

.type {
    width: 84px;
}

.size {
    width: 47px;
}

td {
    height: 15px;
    padding: 0;
    white-space: nowrap;
    color: #6d6d6d;
}

td:first-child {
    display: flex;
    align-items: center;
    gap: 3px;
    color: #111;
}

.number {
    text-align: right;
}

.status {
    display: flex;
    align-items: center;
    height: 18px;
    padding: 0 5px 1px 9px;
    color: #1e395b;
}

.status span {
    padding-right: 9px;
    border-right: 1px solid #f0f0f0;
    margin-right: auto;
}

.view {
    width: 15px;
    height: 16px;
}

.view .ico {
    width: 11px;
}

.view.on {
    border: 1px solid #26a0da;
    background-color: #cbe8f6;
}

.watermark {
    position: absolute;
    right: 46px;
    bottom: 61px;
    color: rgba(165, 165, 165, 0.8);
    line-height: 16px;
    white-space: nowrap;
}

.watermark p {
    font-size: 10px;
}

.watermark .big-line {
    font-size: 13px;
}

/* taskbar */
.taskbar {
    display: flex;
    height: 28px;
    padding-left: 2px;
    background: linear-gradient(to right, #cfe8ef, #d2e1ec 60%, #d8ddec);
}

.taskbar button {
    width: 28px;
    margin-right: 6px;
}

.taskbar svg {
    width: 12px;
    height: 12px;
}

.taskbar .app {
    border-bottom: 1px solid #1a72c4;
}

.taskbar .first {
    margin-left: 1px;
}

.taskbar .app svg {
    width: 17px;
    height: 17px;
}

.taskbar .open {
    width: 33px;
    margin-left: -3px;
    margin-right: 5px;
    border-right: 1px solid #b8ccd4;
    background-color: #f0f7fa;
}

.tray {
    display: flex;
    align-items: center;
    margin-left: auto;
    padding-right: 3px;
}

.tray button {
    width: 13px;
    margin-right: 4px;
}

.lang {
    margin-right: 24px;
    color: #f4f8fc;
}

.tray .weather {
    width: 18px;
    margin-right: 10px;
}

.taskbar .weather svg {
    width: 18px;
    height: 12px;
}

time {
    width: 42px;
    padding-bottom: 2px;
    line-height: 12px;
    text-align: center;
    white-space: nowrap;
}

.tray .notice {
    align-self: stretch;
    width: 37px;
    margin: 0;
    padding-right: 4px;
    border-right: 1px solid #b6bccb;
}
```
